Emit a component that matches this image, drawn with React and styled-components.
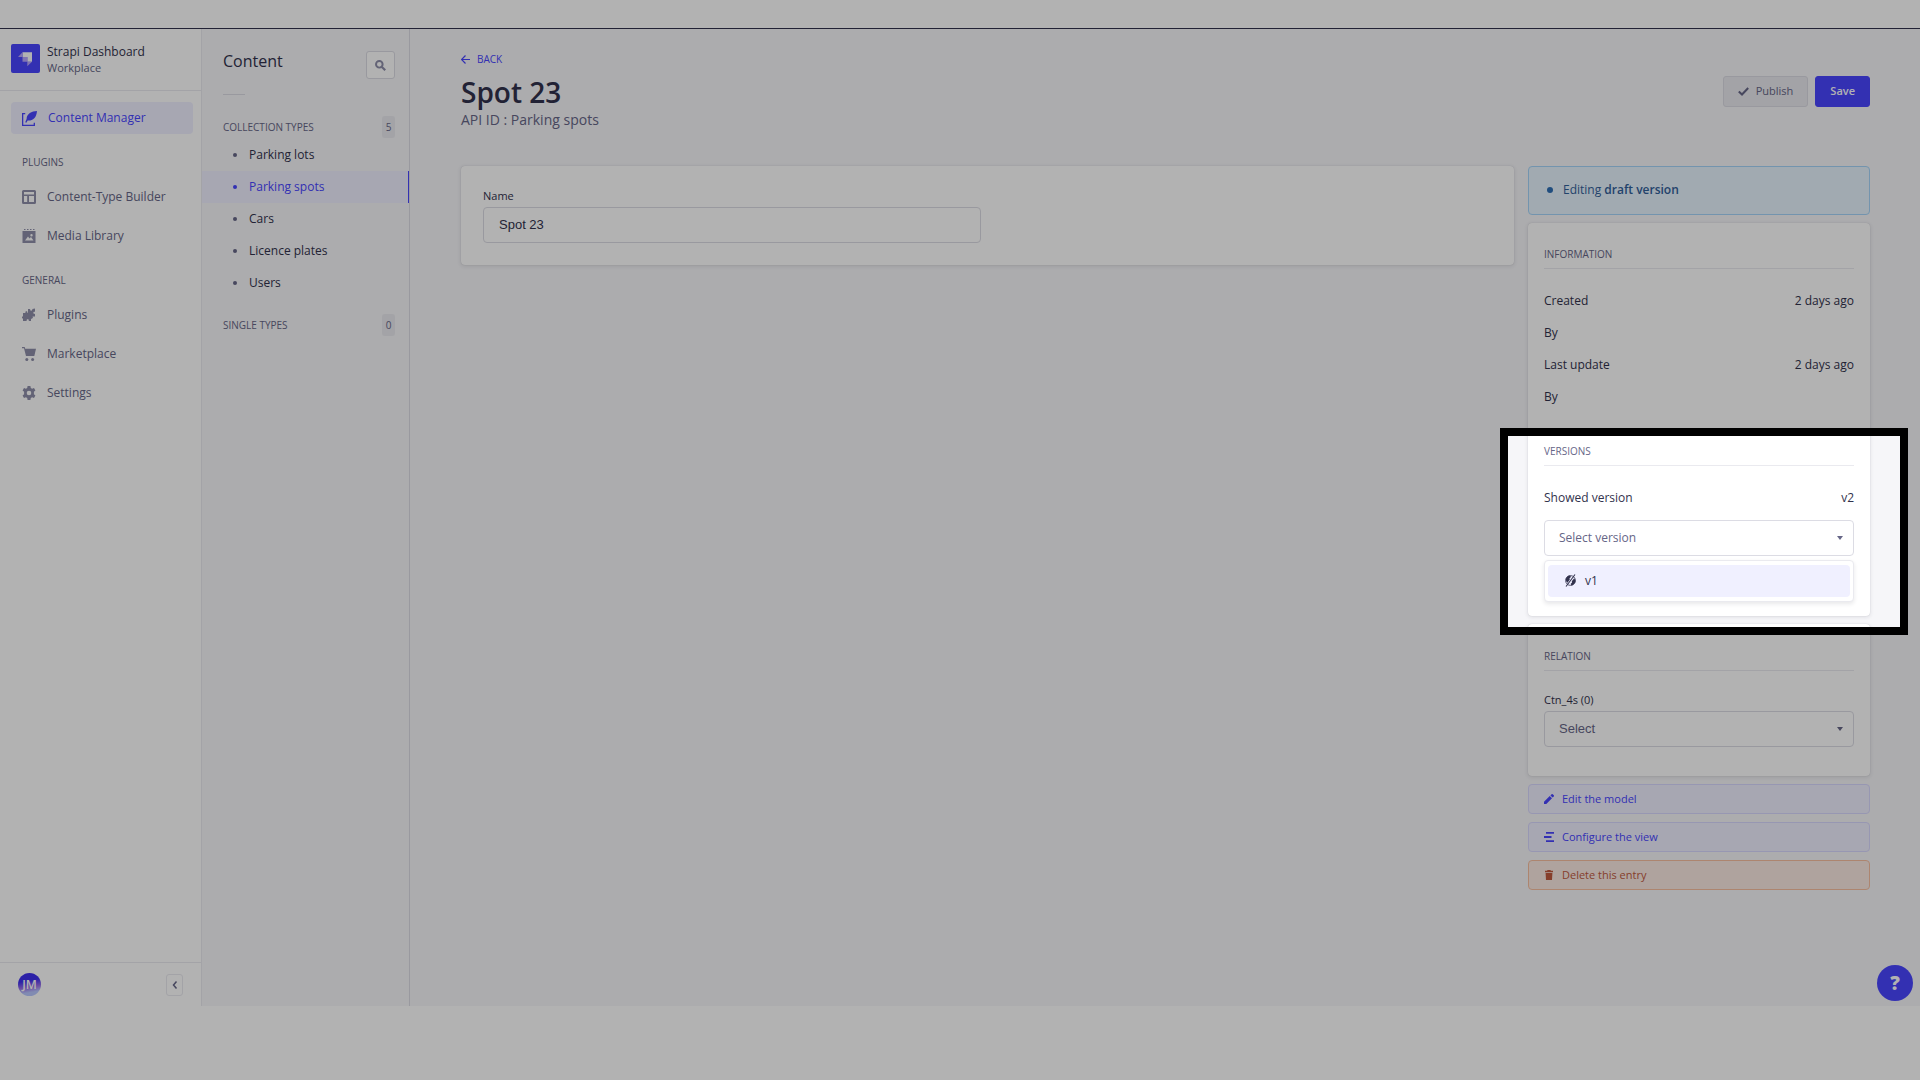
import React from 'react';
import styled, { createGlobalStyle, css } from 'styled-components';

const colors = {
  primary100: '#f0f0ff',
  primary200: '#d9d8ff',
  primary600: '#4945ff',
  danger100: '#fbeae3',
  danger200: '#f8bfa0',
  danger600: '#c05a3e',
  neutral0: '#ffffff',
  neutral100: '#f6f6f9',
  neutral150: '#eaeaef',
  neutral200: '#dcdce4',
  neutral500: '#8e8ea9',
  neutral600: '#666687',
  neutral800: '#32324d',
};

const GlobalStyle = createGlobalStyle`
  * {
    box-sizing: border-box;
  }

  body {
    margin: 0;
    background: ${colors.neutral0};
    color: ${colors.neutral800};
    font-family: "Open Sans", "Noto Sans", sans-serif;
    font-size: 12px;
    line-height: 16px;
  }

  button, input, select {
    font: inherit;
    color: inherit;
    margin: 0;
  }

  a {
    color: inherit;
    text-decoration: none;
  }

  ul {
    list-style: none;
    margin: 0;
    padding: 0;
  }

  svg {
    display: block;
    flex: none;
  }
`;

const Page = styled.div`
  position: relative;
  display: flex;
  flex-direction: column;
  min-height: 100vh;
  padding: 28px 0 74px;
  overflow: hidden;
`;

const Shell = styled.div`
  display: flex;
  flex: 1;
  border-top: 1px solid ${colors.neutral800};
  background: ${colors.neutral100};
`;

/* main navigation */

const MainNav = styled.nav`
  display: flex;
  flex-direction: column;
  flex: 0 0 202px;
  background: ${colors.neutral0};
  border-right: 1px solid ${colors.neutral150};
`;

const Brand = styled.div`
  display: flex;
  align-items: center;
  gap: 7px;
  height: 62px;
  padding: 0 11px 3px;
  border-bottom: 1px solid ${colors.neutral150};
`;

const BrandText = styled.div`
  padding-top: 3px;
`;

const BrandName = styled.div`
  font-weight: 500;
`;

const BrandPlace = styled.div`
  color: ${colors.neutral600};
  font-size: 11px;
  line-height: 15px;
`;

const NavBody = styled.div`
  flex: 1;
  padding: 11px 8px 0 11px;
`;

const NavLabel = styled.h2`
  margin: 0;
  padding: 11px 11px 9px;
  color: ${colors.neutral600};
  font-size: 10px;
  font-weight: 500;
  line-height: 20px;
  text-transform: uppercase;
`;

const NavLink = styled.a`
  display: flex;
  align-items: center;
  gap: 11px;
  height: 32px;
  margin-bottom: 7px;
  padding: 0 11px;
  border-radius: 4px;
  color: ${colors.neutral600};

  svg {
    color: ${colors.neutral500};
  }

  ${(props) => props.$active && css`
    background: ${colors.primary100};
    color: ${colors.primary600};
    font-weight: 500;

    svg {
      color: ${colors.primary600};
    }
  `}
`;

const NavFooter = styled.div`
  display: flex;
  align-items: center;
  justify-content: space-between;
  height: 44px;
  padding: 0 18px;
  border-top: 1px solid ${colors.neutral150};
`;

const Avatar = styled.span`
  display: flex;
  align-items: center;
  justify-content: center;
  width: 23px;
  height: 23px;
  border-radius: 50%;
  background: linear-gradient(170deg, #4030f0 35%, #9a70e8 60%, #b9c8ff 80%);
  color: ${colors.neutral0};
  font-size: 12px;
  font-weight: 600;
`;

const CollapseButton = styled.button`
  display: flex;
  align-items: center;
  justify-content: center;
  width: 17px;
  height: 22px;
  padding: 0;
  border: 1px solid ${colors.neutral150};
  border-radius: 3px;
  background: ${colors.neutral0};
  color: ${colors.neutral600};
`;

/* content sub navigation */

const SubNav = styled.nav`
  flex: 0 0 208px;
  border-right: 1px solid ${colors.neutral200};
`;

const SubNavHeader = styled.div`
  display: flex;
  align-items: flex-start;
  justify-content: space-between;
  margin: 0 14px 0 21px;
  padding-top: 22px;
`;

const SubNavTitle = styled.h2`
  margin: 0;
  font-size: 16px;
  font-weight: 500;
  line-height: 20px;
`;

const SearchButton = styled.button`
  display: flex;
  align-items: center;
  justify-content: center;
  width: 29px;
  height: 28px;
  padding: 0;
  border: 1px solid ${colors.neutral200};
  border-radius: 3px;
  background: ${colors.neutral0};
  color: ${colors.neutral500};
`;

const Divider = styled.hr`
  width: 22px;
  height: 1px;
  margin: 15px 0 21px 21px;
  border: 0;
  background: ${colors.neutral200};
`;

const GroupHeader = styled.div`
  display: flex;
  align-items: center;
  justify-content: space-between;
  height: 22px;
  margin: 0 14px 0 21px;
  color: ${colors.neutral600};
  font-size: 10px;
  font-weight: 500;
  text-transform: uppercase;
`;

const Badge = styled.span`
  width: 13px;
  border-radius: 3px;
  background: ${colors.neutral150};
  line-height: 22px;
  text-align: center;
`;

const TypeList = styled.ul`
  padding: 1px 0 15px;
`;

const TypeLink = styled.a`
  display: flex;
  align-items: center;
  gap: 12px;
  height: 32px;
  padding-left: 31px;

  &::before {
    content: '';
    width: 4px;
    height: 4px;
    border-radius: 50%;
    background: ${colors.neutral600};
  }

  ${(props) => props.$active && css`
    border-right: 1px solid ${colors.primary600};
    background: ${colors.primary100};
    color: ${colors.primary600};
    font-weight: 500;

    &::before {
      background: ${colors.primary600};
    }
  `}
`;

/* edit view */

const Main = styled.main`
  flex: 1;
  min-width: 0;
  padding: 22px 50px 0 51px;
`;

const BackLink = styled.a`
  display: inline-flex;
  align-items: center;
  gap: 7px;
  color: ${colors.primary600};
  font-size: 10px;
  font-weight: 500;
  text-transform: uppercase;
`;

const TitleRow = styled.header`
  display: flex;
  align-items: flex-start;
  justify-content: space-between;
  height: 98px;
`;

const Title = styled.h1`
  margin: 6px 0 0;
  font-size: 28px;
  font-weight: 600;
  line-height: 36px;
`;

const Subtitle = styled.p`
  margin: 0;
  color: ${colors.neutral600};
  font-size: 14px;
  line-height: 20px;
`;

const Actions = styled.div`
  display: flex;
  gap: 7px;
  padding-top: 8px;
`;

const ActionButton = styled.button`
  display: flex;
  align-items: center;
  gap: 7px;
  height: 31px;
  padding: 0 14px;
  border: 1px solid ${colors.neutral200};
  border-radius: 3px;
  background: ${colors.neutral150};
  color: ${colors.neutral600};
  font-size: 11px;
  font-weight: 500;

  ${(props) => props.$primary && css`
    border-color: ${colors.primary600};
    background: ${colors.primary600};
    color: ${colors.neutral0};
    font-weight: 600;
  `}
`;

const Columns = styled.div`
  display: grid;
  grid-template-columns: minmax(0, 1fr) 342px;
  align-items: start;
  gap: 14px;
`;

const Card = styled.section`
  border-radius: 4px;
  background: ${colors.neutral0};
  box-shadow: 0 1px 4px rgba(33, 33, 52, 0.12), 0 0 1px rgba(33, 33, 52, 0.2);
`;

const FormCard = styled(Card)`
  padding: 22px;
`;

const Field = styled.div`
  display: flex;
  flex-direction: column;
  gap: 3px;
`;

const HalfField = styled(Field)`
  width: calc(50% - 7px);
`;

const Label = styled.label`
  font-size: 11px;
  font-weight: 500;
`;

const controlStyle = css`
  width: 100%;
  height: 36px;
  padding: 0 15px;
  border: 1px solid ${colors.neutral200};
  border-radius: 4px;
  background: ${colors.neutral0};
`;

const TextInput = styled.input`
  ${controlStyle}
  font-family: "Liberation Sans", Arial, sans-serif;
  font-size: 13px;
`;

const Side = styled.aside`
  display: flex;
  flex-direction: column;
  gap: 8px;
`;

const DraftNotice = styled.div`
  display: flex;
  align-items: center;
  gap: 10px;
  height: 49px;
  padding: 0 18px;
  border: 1px solid #a5d5f9;
  border-radius: 4px;
  background: #e7f4fe;
  color: #32609a;

  b {
    font-weight: 600;
  }

  &::before {
    content: '';
    width: 6px;
    height: 6px;
    border-radius: 50%;
    background: #2f6fb5;
  }
`;

const SideCard = styled(Card)`
  padding: 24px 16px 29px;
`;

const VersionCard = styled(SideCard)`
  padding-top: 23px;
  padding-bottom: 60px;
`;

const SectionTitle = styled.h3`
  margin: 0;
  padding-bottom: 6px;
  border-bottom: 1px solid ${colors.neutral150};
  color: ${colors.neutral600};
  font-size: 10px;
  font-weight: 500;
  text-transform: uppercase;
`;

const Facts = styled.dl`
  display: flex;
  flex-direction: column;
  gap: 16px;
  margin: 0;
  padding: 24px 0 14px;
`;

const InfoFacts = styled(Facts)`
  padding-bottom: 38px;
`;

const Fact = styled.div`
  display: flex;
  justify-content: space-between;

  dt {
    font-weight: 500;
  }

  dd {
    margin: 0;
  }
`;

const SelectBox = styled.div`
  position: relative;
`;

const Select = styled.select`
  ${controlStyle}
  padding: 0 14px;
  appearance: none;
  color: ${colors.neutral600};
  font-family: ${(props) => (props.$plain ? '"Liberation Sans", Arial, sans-serif' : 'inherit')};
  font-size: ${(props) => (props.$plain ? '13px' : '12px')};
`;

const Caret = styled.svg`
  position: absolute;
  top: 16px;
  right: 11px;
  pointer-events: none;
`;

const Options = styled.ul`
  position: absolute;
  top: 40px;
  left: 0;
  right: 0;
  padding: 4px 3px;
  border: 1px solid ${colors.neutral150};
  border-radius: 4px;
  background: ${colors.neutral0};
  box-shadow: 0 2px 4px rgba(33, 33, 52, 0.1);
`;

const Option = styled.button`
  display: flex;
  align-items: center;
  gap: 8px;
  width: 100%;
  height: 32px;
  padding: 0 16px;
  border: 0;
  border-radius: 4px;
  background: ${colors.primary100};
`;

const RelationField = styled(Field)`
  padding-top: 21px;
`;

const SideAction = styled.a`
  display: flex;
  align-items: center;
  gap: 8px;
  height: 30px;
  padding: 0 15px;
  border: 1px solid ${(props) => (props.$danger ? colors.danger200 : colors.primary200)};
  border-radius: 4px;
  background: ${(props) => (props.$danger ? colors.danger100 : colors.primary100)};
  color: ${(props) => (props.$danger ? colors.danger600 : colors.primary600)};
  font-size: 11px;
  font-weight: 500;
`;

/* things floating over the page */

const HelpButton = styled.button`
  position: absolute;
  right: 7px;
  bottom: 79px;
  width: 36px;
  height: 36px;
  padding: 0;
  border: 0;
  border-radius: 50%;
  background: ${colors.primary600};
  color: ${colors.neutral0};
  font-size: 19px;
  font-weight: 800;
`;

const Spotlight = styled.div`
  position: absolute;
  top: 428px;
  right: 12px;
  width: 408px;
  height: 207px;
  border: 8px solid #000;
  box-shadow: 0 0 0 200vmax rgba(0, 0, 0, 0.3);
  pointer-events: none;
`;

function Icon({ size = 14, box = 14, children }) {
  return (
    <svg width={size} height={size} viewBox={`0 0 ${box} ${box}`} fill="currentColor" aria-hidden="true">
      {children}
    </svg>
  );
}

const icons = {
  write: (
    <Icon size={15}>
      <path d="M3 2.500H.6v10.900h10.900V11" fill="none" stroke="currentColor" strokeWidth="1.200" />
      <path d="M14 0C9 .3 4.400 2.300 4.300 7.500L3 10.600l1 .4 1.300-2.100C10 9.300 13.500 6.500 14 0z" />
    </Icon>
  ),
  layout: (
    <Icon>
      <path fillRule="evenodd" d="M1.500 0h11A1.500 1.500 0 0 1 14 1.500v11a1.500 1.500 0 0 1-1.500 1.500h-11A1.500 1.500 0 0 1 0 12.500v-11A1.500 1.500 0 0 1 1.500 0zM2 2v2.500h10V2zm0 4V12h3.200V6zm5 0V12H12V6z" />
    </Icon>
  ),
  media: (
    <Icon>
      <path d="M2 0h1.500v1H2zM5 0h1.500v1H5zM8 0h1.500v1H8zM11 0h1.500v1H11z" />
      <path fillRule="evenodd" d="M.5 2h13v12H.5zm2.500 9.500h8.500L9 8 7.500 9.500 6 7.500zM9.500 5A1.200 1.200 0 1 0 9.500 7.400 1.200 1.200 0 0 0 9.500 5z" />
    </Icon>
  ),
  puzzle: (
    <Icon>
      <path d="M6 1h2.200c-.3.8.1 1.700 1 1.700S10.600 1.700 10.300 1l2.700-.4v3.200c-.8-.4-1.700.1-1.700 1s.9 1.400 1.700 1V8.500h-2.600c.5 1 0 1.900-.9 1.900s-1.400-.9-1-1.900H6z" />
      <path d="M1 5h2.500c-.4-1 .1-1.800.9-1.800S5.700 4 5.400 5H9v3.500c.8-.4 1.700 0 1.700 1s-.9 1.400-1.700 1V13H6.700c.4-1-.1-1.800-1-1.800s-1.300.8-1 1.800H1v-2.700c-.9.300-1.200-.2-1.200-.9S.2 8.300 1 8.600z" />
    </Icon>
  ),
  cart: (
    <Icon>
      <path d="M0 0h2.700l.5 1.700H14L12.300 9H4L2 1.200H0z" />
      <circle cx="4.800" cy="12.500" r="1.500" />
      <circle cx="10.600" cy="12.500" r="1.500" />
    </Icon>
  ),
  cog: (
    <Icon>
      <path fillRule="evenodd" d="M5.600 0h2.800l.4 2 1.300.8 1.900-.7 1.400 2.400-1.500 1.300v2.400l1.500 1.300-1.400 2.400-1.900-.7-1.300.8-.4 2H5.600l-.4-2-1.300-.8-1.900.7L.6 9.500l1.500-1.300V5.800L.6 4.500 2 2.100l1.900.7L5.200 2zM7 4.700a2.300 2.300 0 1 0 0 4.600 2.300 2.300 0 0 0 0-4.600z" />
    </Icon>
  ),
  search: (
    <Icon size={11}>
      <circle cx="5.500" cy="5.500" r="4.200" fill="none" stroke="currentColor" strokeWidth="2.500" />
      <path d="m8.500 8.500 4.500 4.500" stroke="currentColor" strokeWidth="2.800" />
    </Icon>
  ),
  back: (
    <Icon size={9} box={9}>
      <path d="M9 4.500H1M4.500.5l-4 4 4 4" fill="none" stroke="currentColor" strokeWidth="1.200" />
    </Icon>
  ),
  chevron: (
    <Icon size={8} box={8}>
      <path d="M5.500.5 2.500 4l3 3.500" fill="none" stroke="currentColor" strokeWidth="1.500" />
    </Icon>
  ),
  check: (
    <Icon size={11} box={11}>
      <path d="m.8 5.500 3.200 3L10.200 2" fill="none" stroke="currentColor" strokeWidth="2" />
    </Icon>
  ),
  pencil: (
    <Icon size={10} box={10}>
      <path d="M0 10V7.700l5.700-5.600L8 4.300 2.300 10zM6.400 1.400 7.600.2a.8.8 0 0 1 1.100 0l1.100 1.100a.8.8 0 0 1 0 1.100L8.700 3.600z" />
    </Icon>
  ),
  layer: (
    <Icon size={10} box={10}>
      <path d="M2 0h8v1.800H2zM0 4.100h7.500v1.800H0zM2 8.200h8V10H2z" />
    </Icon>
  ),
  trash: (
    <Icon size={10} box={10}>
      <path d="M3.300 0h3.400v.8H9v1.400H1V.8h2.300zM1.600 3h6.800L8 10H2z" />
    </Icon>
  ),
  unpublished: (
    <Icon size={13} box={13}>
      <circle cx="6.500" cy="6.500" r="4.900" fill="none" stroke="currentColor" strokeWidth=".8" />
      <path d="M1.800 5C2.300 3 4 1.700 6.200 1.500L7 3 5.500 4.200l.3 1.300-2.300 3.300L2.200 7.300zM11.500 6.500c0 2.300-1.500 4.300-4 4.900L6.600 9.900 8 8.500l-.2-1.300 2.400-2.900z" />
      <path d="M2 12.500 11 .5" stroke="currentColor" strokeWidth="1.100" />
    </Icon>
  ),
};

function Logo() {
  return (
    <svg width="29" height="29" viewBox="0 0 29 29" aria-hidden="true">
      <rect width="29" height="29" rx="2" fill="#4945ff" />
      <path d="M11.500 8.200H21v9.500h-4.700V13h-4.800z" fill="#fff" />
      <path d="M11.500 8.200V13H7zM11.500 13h4.800v4.700h-4.800zM16.300 17.700H21l-4.700 4.500z" fill="#b9a6ff" />
    </svg>
  );
}

const pluginLinks = [
  { icon: 'layout', label: 'Content-Type Builder' },
  { icon: 'media', label: 'Media Library' },
];

const generalLinks = [
  { icon: 'puzzle', label: 'Plugins' },
  { icon: 'cart', label: 'Marketplace' },
  { icon: 'cog', label: 'Settings' },
];

const collectionTypes = ['Parking lots', 'Parking spots', 'Cars', 'Licence plates', 'Users'];

function NavItems({ links }) {
  return links.map((link) => (
    <NavLink key={link.label} href="#">
      {icons[link.icon]}
      {link.label}
    </NavLink>
  ));
}

function DropDown({ id, placeholder, plain, label, children }) {
  return (
    <SelectBox>
      <Select id={id} $plain={plain} aria-label={label}>
        <option>{placeholder}</option>
      </Select>
      <Caret width="6" height="4" viewBox="0 0 6 4" fill={colors.neutral600} aria-hidden="true">
        <path d="M0 0h6L3 4z" />
      </Caret>
      {children}
    </SelectBox>
  );
}

function Navigation() {
  return (
    <MainNav aria-label="Main">
      <Brand>
        <Logo />
        <BrandText>
          <BrandName>Strapi Dashboard</BrandName>
          <BrandPlace>Workplace</BrandPlace>
        </BrandText>
      </Brand>
      <NavBody>
        <NavLink href="#" $active>
          {icons.write}
          Content Manager
        </NavLink>
        <NavLabel>Plugins</NavLabel>
        <NavItems links={pluginLinks} />
        <NavLabel>General</NavLabel>
        <NavItems links={generalLinks} />
      </NavBody>
      <NavFooter>
        <Avatar>JM</Avatar>
        <CollapseButton aria-label="Collapse the navbar">{icons.chevron}</CollapseButton>
      </NavFooter>
    </MainNav>
  );
}

function ContentNav() {
  return (
    <SubNav aria-label="Content">
      <SubNavHeader>
        <SubNavTitle>Content</SubNavTitle>
        <SearchButton aria-label="Search">{icons.search}</SearchButton>
      </SubNavHeader>
      <Divider />
      <GroupHeader>
        Collection types
        <Badge>5</Badge>
      </GroupHeader>
      <TypeList>
        {collectionTypes.map((type) => (
          <li key={type}>
            <TypeLink href="#" $active={type === 'Parking spots'}>{type}</TypeLink>
          </li>
        ))}
      </TypeList>
      <GroupHeader>
        Single types
        <Badge>0</Badge>
      </GroupHeader>
    </SubNav>
  );
}

function EditView() {
  return (
    <Main>
      <BackLink href="#">
        {icons.back}
        Back
      </BackLink>
      <TitleRow>
        <div>
          <Title>Spot 23</Title>
          <Subtitle>API ID : Parking spots</Subtitle>
        </div>
        <Actions>
          <ActionButton>
            {icons.check}
            Publish
          </ActionButton>
          <ActionButton $primary>Save</ActionButton>
        </Actions>
      </TitleRow>
      <Columns>
        <FormCard>
          <HalfField>
            <Label htmlFor="name">Name</Label>
            <TextInput id="name" defaultValue="Spot 23" />
          </HalfField>
        </FormCard>
        <Side>
          <DraftNotice>
            <span>Editing <b>draft version</b></span>
          </DraftNotice>
          <VersionCard>
            <SectionTitle>Information</SectionTitle>
            <InfoFacts>
              <Fact><dt>Created</dt><dd>2 days ago</dd></Fact>
              <Fact><dt>By</dt></Fact>
              <Fact><dt>Last update</dt><dd>2 days ago</dd></Fact>
              <Fact><dt>By</dt></Fact>
            </InfoFacts>
            <SectionTitle>Versions</SectionTitle>
            <Facts>
              <Fact><dt>Showed version</dt><dd>v2</dd></Fact>
            </Facts>
            <DropDown placeholder="Select version" label="Version">
              <Options>
                <li>
                  <Option>
                    {icons.unpublished}
                    v1
                  </Option>
                </li>
              </Options>
            </DropDown>
          </VersionCard>
          <SideCard>
            <SectionTitle>Relation</SectionTitle>
            <RelationField>
              <Label htmlFor="relation">Ctn_4s (0)</Label>
              <DropDown id="relation" placeholder="Select" plain />
            </RelationField>
          </SideCard>
          <SideAction href="#">
            {icons.pencil}
            Edit the model
          </SideAction>
          <SideAction href="#">
            {icons.layer}
            Configure the view
          </SideAction>
          <SideAction href="#" $danger>
            {icons.trash}
            Delete this entry
          </SideAction>
        </Side>
      </Columns>
    </Main>
  );
}

function App() {
  return (
    <Page>
      <GlobalStyle />
      <Shell>
        <Navigation />
        <ContentNav />
        <EditView />
      </Shell>
      <HelpButton aria-label="Help">?</HelpButton>
      <Spotlight />
    </Page>
  );
}

export default App;
